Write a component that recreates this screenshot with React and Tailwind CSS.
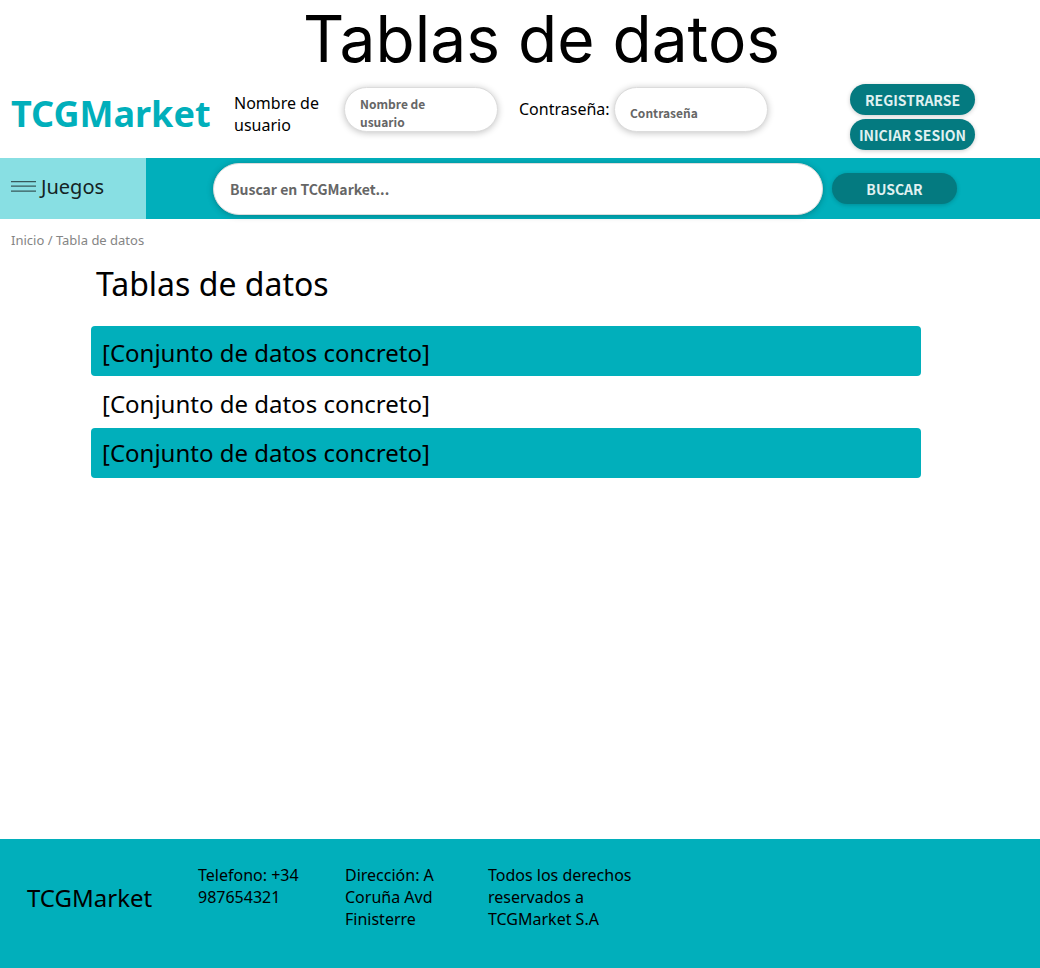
const datasets = [
  { id: 1, name: "[Conjunto de datos concreto]" },
  { id: 2, name: "[Conjunto de datos concreto]" },
  { id: 3, name: "[Conjunto de datos concreto]" },
];

const controlFont = "font-['Noto_Sans_CJK_SC','Noto_Sans',sans-serif]";

const field =
  "block w-[154px] h-[45px] rounded-full border border-[#dcdcdc] bg-white px-[15px] font-bold text-xs leading-[18px] text-[#666666] placeholder:text-[#666666] placeholder:opacity-100 shadow-[0_1px_7px_rgba(0,0,0,0.24)] outline-none";

function PillButton({ children, type = "button" }) {
  return (
    <button
      type={type}
      className={`${controlFont} h-[31px] w-[125px] shrink-0 rounded-full bg-[#047a80] pt-px text-sm leading-5 font-bold whitespace-nowrap text-[#e0f1f1] shadow-[0_1px_4px_rgba(0,0,0,0.2)]`}
    >
      {children}
    </button>
  );
}

function MenuIcon() {
  return (
    <svg width="25" height="12" viewBox="0 0 25 12" fill="none" stroke="#37595b" strokeWidth="1.3" aria-hidden="true">
      <path d="M0 .7h25M0 5.2h25M0 10.2h25" />
    </svg>
  );
}

export default function App() {
  return (
    <div className="flex min-h-screen flex-col bg-white font-['Noto_Sans',sans-serif] text-black">
      <h1 className="pl-[43px] text-center font-['Inter',sans-serif] text-[64px] leading-[78px]">Tablas de datos</h1>

      <header className="flex h-20 items-start pr-[65px] pl-[11px]">
        <a href="#" className="w-[223px] shrink-0 pt-[11px] text-4xl leading-[50px] font-bold text-[#01afbb]">
          TCGMarket
        </a>
        <form className="flex flex-1 items-start">
          <label htmlFor="user" className="w-[110px] pt-[14px] text-base leading-[22px]">
            Nombre de usuario
          </label>
          <textarea
            id="user"
            rows={2}
            placeholder={"Nombre de\nusuario"}
            className={`${controlFont} ${field} mt-[9px] resize-none overflow-hidden pt-[7px]`}
          />
          <label htmlFor="password" className="ml-[21px] w-[95px] pt-5 text-base leading-[22px] whitespace-nowrap">
            Contraseña:
          </label>
          <input
            id="password"
            type="password"
            placeholder="Contraseña"
            className={`${controlFont} ${field} mt-[9px] pt-[5px]`}
          />
          <div className="mt-1.5 ml-auto flex flex-col gap-1">
            <PillButton>REGISTRARSE</PillButton>
            <PillButton>INICIAR SESION</PillButton>
          </div>
        </form>
      </header>

      <div className="flex h-[61px] items-stretch bg-[#01afbb] pr-[83px]">
        <button type="button" className="flex w-[146px] shrink-0 items-center gap-[5px] bg-[#88dfe3] pb-1 pl-[11px] text-xl text-[#142324]">
          <MenuIcon />
          Juegos
        </button>
        <form role="search" className="flex flex-1 items-center gap-[9px] pl-[67px]">
          <input
            type="search"
            aria-label="Buscar en TCGMarket"
            placeholder="Buscar en TCGMarket..."
            className={`${controlFont} h-[52px] min-w-0 flex-1 rounded-full border border-[#dcdcdc] bg-white px-4 text-sm font-bold text-[#666666] shadow-[0_1px_6px_rgba(0,0,0,0.25)] outline-none placeholder:text-[#666666] placeholder:opacity-100`}
          />
          <PillButton type="submit">BUSCAR</PillButton>
        </form>
      </div>

      <nav aria-label="Ruta" className="px-[11px] pt-3 text-[13px] leading-[18px] text-[#858585]">
        <a href="#">Inicio</a> / <a href="#">Tabla de datos</a>
      </nav>

      <main className="flex-1 pt-[13px] pr-[119px] pl-[91px]">
        <h2 className="px-[5px] text-[32px] leading-[44px]">Tablas de datos</h2>
        <ul className="mt-5 flex flex-col gap-px">
          {datasets.map((d) => (
            <li key={d.id} className="h-[50px] rounded-sm px-[11px] pt-[10px] text-2xl leading-[33px] last:pt-2 odd:bg-[#01afbb]">
              <a href="#">{d.name}</a>
            </li>
          ))}
        </ul>
      </main>

      <footer className="flex h-[129px] items-start bg-[#01afbb] pt-[25px] pl-[27px] text-base leading-[22px]">
        <p className="w-[171px] pt-[17px] text-2xl leading-[33px]">TCGMarket</p>
        <p className="w-[147px] pr-10">Telefono: +34 987654321</p>
        <p className="w-[143px] pr-10">Dirección: A Coruña Avd Finisterre</p>
        <p className="w-[150px]">Todos los derechos reservados a TCGMarket S.A</p>
      </footer>
    </div>
  );
}
